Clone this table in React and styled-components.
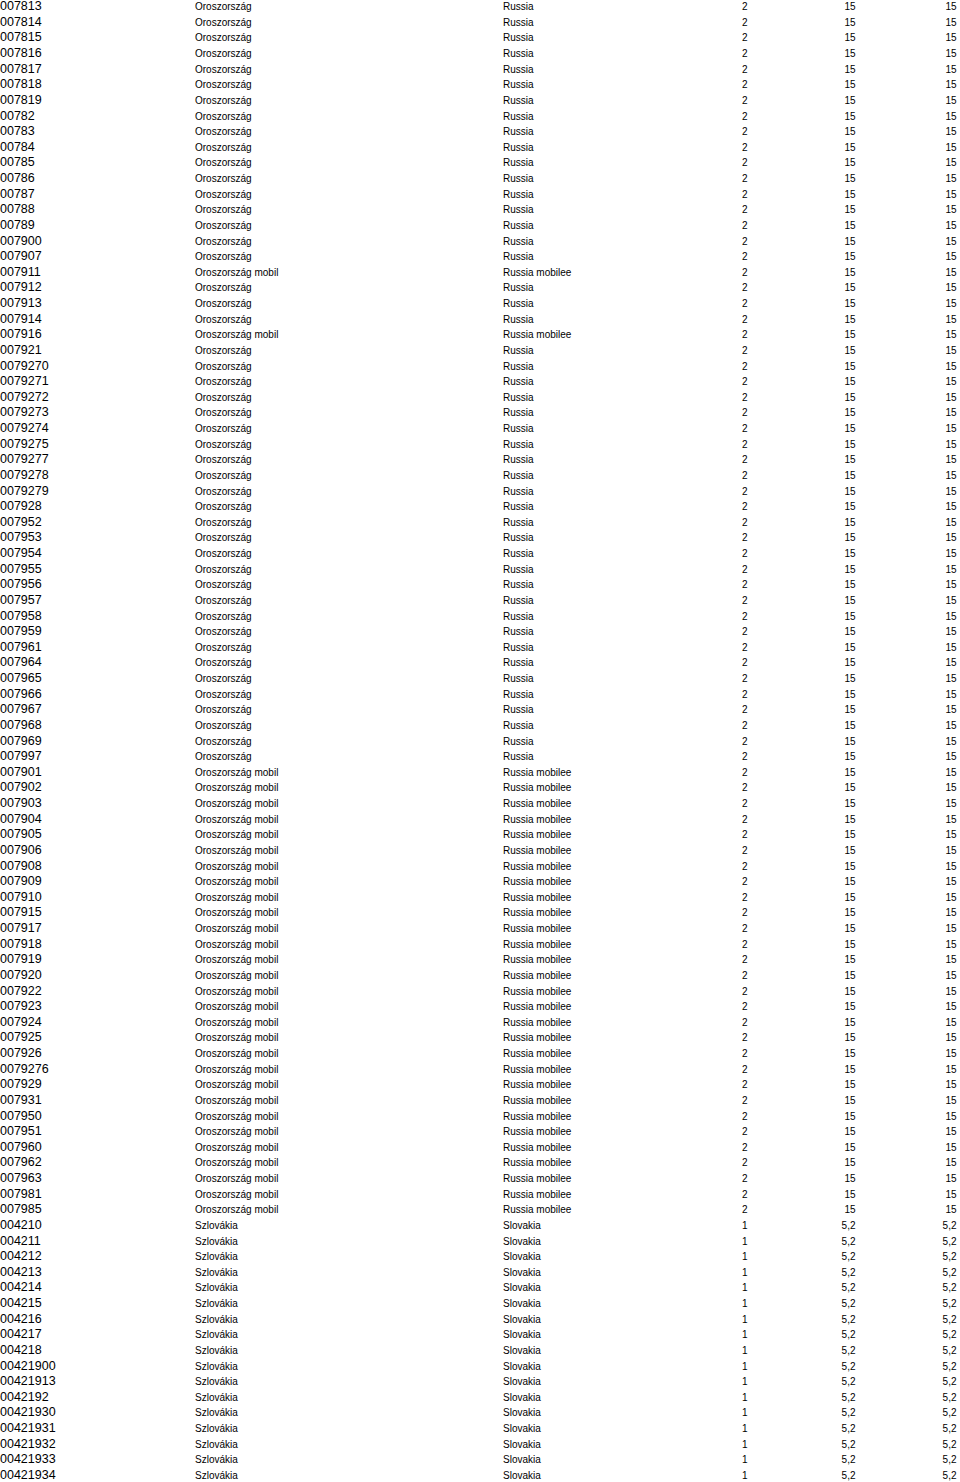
import React from 'react'
import styled, { createGlobalStyle } from 'styled-components'

const GlobalStyle = createGlobalStyle`
  html, body {
    margin: 0;
    padding: 0;
    background: #fff;
    overflow: hidden;
  }
`

// Country kinds: what goes in the name columns and the rate columns
const KINDS = {
  r: { hu: 'Oroszország', en: 'Russia', unit: '2', rate: '15' },
  m: { hu: 'Oroszország mobil', en: 'Russia mobilee', unit: '2', rate: '15' },
  s: { hu: 'Szlovákia', en: 'Slovakia', unit: '1', rate: '5,2' },
}

const RAW = `007813 r,007814 r,007815 r,007816 r,007817 r,007818 r,007819 r,00782 r,00783 r,00784 r,00785 r,00786 r,00787 r,00788 r,00789 r,007900 r,007907 r,007911 m,007912 r,007913 r,007914 r,007916 m,007921 r,0079270 r,0079271 r,0079272 r,0079273 r,0079274 r,0079275 r,0079277 r,0079278 r,0079279 r,007928 r,007952 r,007953 r,007954 r,007955 r,007956 r,007957 r,007958 r,007959 r,007961 r,007964 r,007965 r,007966 r,007967 r,007968 r,007969 r,007997 r,007901 m,007902 m,007903 m,007904 m,007905 m,007906 m,007908 m,007909 m,007910 m,007915 m,007917 m,007918 m,007919 m,007920 m,007922 m,007923 m,007924 m,007925 m,007926 m,0079276 m,007929 m,007931 m,007950 m,007951 m,007960 m,007962 m,007963 m,007981 m,007985 m,004210 s,004211 s,004212 s,004213 s,004214 s,004215 s,004216 s,004217 s,004218 s,00421900 s,00421913 s,0042192 s,00421930 s,00421931 s,00421932 s,00421933 s,00421934 s`

const rows = RAW.split(',').map((item) => {
  const [code, kind] = item.trim().split(' ')
  return { code, ...KINDS[kind] }
})

const App = () => {
  return (
    <>
      <GlobalStyle />
      <Table>
        {rows.map((row, index) => (
          <Row key={index}>
            <Code>{row.code}</Code>
            <Cell>{row.hu}</Cell>
            <Cell>{row.en}</Cell>
            <Num>{row.unit}</Num>
            <Num>{row.rate}</Num>
            <Num>{row.rate}</Num>
          </Row>
        ))}
      </Table>
    </>
  )
}

const Table = styled.div`
  width: 960px;
  margin-top: -0.8px;
  font-family: 'Liberation Sans', Arial, Helvetica, sans-serif;
  color: #000;
`

const Row = styled.div`
  display: grid;
  grid-template-columns: 195px 308px 194.5px 50px 108px 101px;
  align-items: baseline;
  height: 15.64px;
  line-height: 15.64px;
  white-space: nowrap;
`

const Code = styled.span`
  font-size: 12.5px;
`

const Cell = styled.span`
  font-size: 10px;
`

const Num = styled.span`
  font-size: 10px;
  text-align: right;
`

export default App
